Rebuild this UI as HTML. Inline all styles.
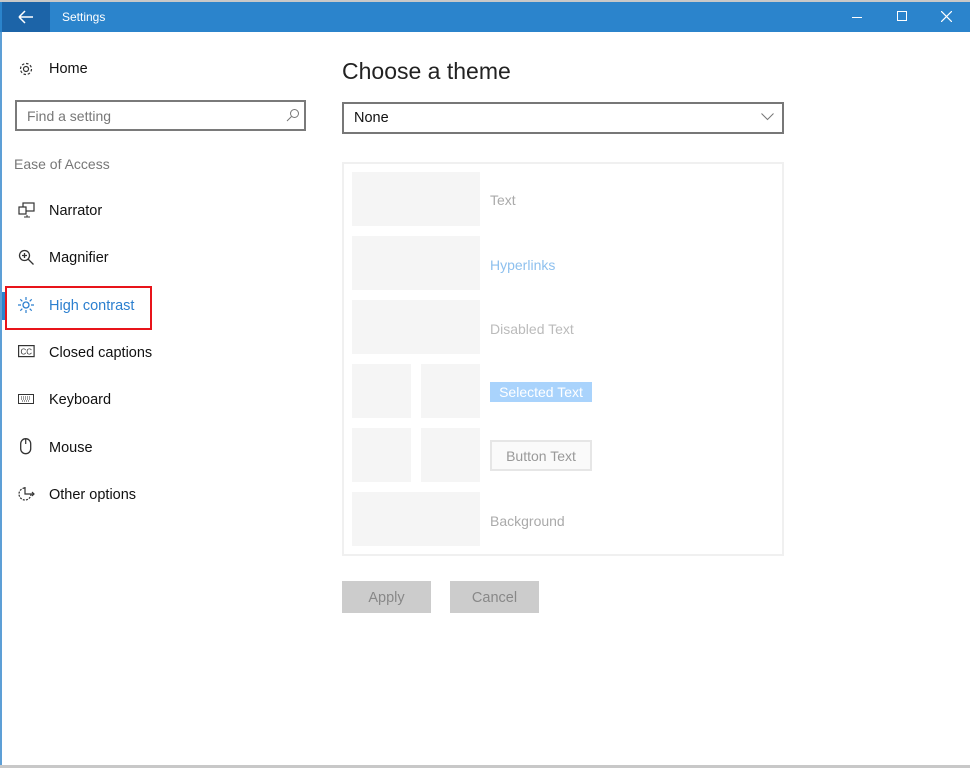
<!DOCTYPE html>
<html><head><meta charset="utf-8"><style>
*{margin:0;padding:0;box-sizing:border-box}
body{width:970px;height:768px;background:#fff;font-family:"Liberation Sans",sans-serif;position:relative;overflow:hidden}
.a{position:absolute}
.nav{position:absolute;left:49px;font-size:14.5px;color:#111}
.ic{position:absolute;left:18px}
.sw{position:absolute;background:#f5f5f5}
.lb{position:absolute;left:490px;font-size:14px;color:#aaa}
</style></head><body>
<div class="a" style="left:0;top:0;width:970px;height:2px;background:#c8c8c8"></div>
<div class="a" style="left:0;top:2px;width:970px;height:30px;background:#2b84cc"></div>
<div class="a" style="left:2px;top:2px;width:48px;height:30px;background:#1c64a8"></div>
<svg class="a" style="left:18px;top:10px" width="16" height="14" viewBox="0 0 16 14"><path d="M1 7H15M1 7L7 1M1 7L7 13" stroke="#fff" stroke-width="1.5" fill="none"/></svg>
<div class="a" style="left:62px;top:10px;font-size:12px;color:#fff">Settings</div>
<div class="a" style="left:852px;top:17px;width:10px;height:1px;background:#fff"></div>
<div class="a" style="left:897px;top:11px;width:10px;height:10px;border:1px solid #fff"></div>
<svg class="a" style="left:941px;top:11px" width="11" height="11"><path d="M0 0L11 11M11 0L0 11" stroke="#fff" stroke-width="1.2"/></svg>
<div class="a" style="left:0;top:32px;width:2px;height:736px;background:#5d9fd6"></div>
<div class="a" style="left:0;top:765px;width:970px;height:3px;background:#c8c8c8"></div>

<svg class="ic" style="top:61px" width="16" height="16" viewBox="0 0 16 16"><circle cx="8" cy="8" r="2.5" fill="none" stroke="#333" stroke-width="1.2"/><circle cx="8" cy="8" r="5.5" fill="none" stroke="#333" stroke-width="1.2" stroke-dasharray="2.5 1.8"/></svg>
<div class="nav" style="top:61px">Home</div>
<div class="a" style="left:15px;top:100px;width:291px;height:31px;border:2px solid #7a7a7a"></div>
<div class="a" style="left:27px;top:108px;font-size:14px;color:#777">Find a setting</div>
<svg class="a" style="left:286px;top:108px" width="14" height="14"><circle cx="8.5" cy="5.5" r="4" fill="none" stroke="#777"/><path d="M5.5 8.5L1 13" stroke="#777"/></svg>
<div class="a" style="left:14px;top:156px;font-size:14px;color:#777">Ease of Access</div>

<svg class="ic" style="top:202px" width="18" height="16"><rect x="5" y="1" width="11" height="8" fill="none" stroke="#333" stroke-width="1.2"/><rect x="1" y="5" width="7" height="7" fill="#fff" stroke="#333" stroke-width="1.2"/><path d="M9 13v2M6 15h6" stroke="#333"/></svg>
<div class="nav" style="top:203px">Narrator</div>
<svg class="ic" style="top:249px" width="17" height="17"><circle cx="6.5" cy="6.5" r="5" fill="none" stroke="#333" stroke-width="1.3"/><path d="M10 10L15.5 15.5M6.5 4v5M4 6.5h5" stroke="#333" stroke-width="1.3"/></svg>
<div class="nav" style="top:250px">Magnifier</div>
<div class="a" style="left:2px;top:292px;width:3px;height:28px;background:#2b84cc"></div>
<svg class="ic" style="top:297px" width="16" height="16"><circle cx="8" cy="8" r="3" fill="none" stroke="#2b7fcf" stroke-width="1.3"/><path d="M8 0v3M8 13v3M0 8h3M13 8h3M2.3 2.3l2 2M11.7 11.7l2 2M2.3 13.7l2-2M11.7 4.3l2-2" stroke="#2b7fcf" stroke-width="1.2"/></svg>
<div class="nav" style="top:298px;color:#2b7fcf">High contrast</div>
<div class="a" style="left:5px;top:286px;width:147px;height:44px;border:2px solid #e8141a"></div>
<svg class="ic" style="top:345px" width="17" height="13"><rect x="0.6" y="0.6" width="15.5" height="11" fill="none" stroke="#333" stroke-width="1.2"/><text x="2.5" y="9.5" font-size="8" font-family="Liberation Sans" fill="#333">CC</text></svg>
<div class="nav" style="top:345px">Closed captions</div>
<svg class="ic" style="top:394px" width="16" height="10"><rect x="0.5" y="0.5" width="15" height="9" fill="none" stroke="#333"/><path d="M3 3h10M3 5h10M4 7h8" stroke="#333" stroke-dasharray="1 1"/></svg>
<div class="nav" style="top:392px">Keyboard</div>
<svg class="ic" style="top:438px;left:20px" width="12" height="17"><rect x="0.7" y="0.7" width="10" height="15" rx="5" fill="none" stroke="#333" stroke-width="1.3"/><path d="M5.7 1v5" stroke="#333" stroke-width="1.2"/></svg>
<div class="nav" style="top:440px">Mouse</div>
<svg class="ic" style="top:485px" width="18" height="17"><path d="M13 9a6 6 0 1 1-6-6" fill="none" stroke="#333" stroke-width="1.2" stroke-dasharray="2 1.2"/><path d="M7 2v7h9M14 7l2 2-2 2" fill="none" stroke="#333" stroke-width="1.2"/></svg>
<div class="nav" style="top:487px">Other options</div>

<div class="a" style="left:342px;top:58px;font-size:23px;color:#222">Choose a theme</div>
<div class="a" style="left:342px;top:102px;width:442px;height:32px;border:2px solid #777"></div>
<div class="a" style="left:354px;top:110px;font-size:14.5px;color:#111">None</div>
<svg class="a" style="left:761px;top:113px" width="13" height="8"><path d="M0.5 0.5L6.5 6.5L12.5 0.5" fill="none" stroke="#777"/></svg>

<div class="a" style="left:342px;top:162px;width:442px;height:394px;border:2px solid #f0f0f0"></div>
<div class="sw" style="left:352px;top:172px;width:128px;height:54px"></div>
<div class="sw" style="left:352px;top:236px;width:128px;height:54px"></div>
<div class="sw" style="left:352px;top:300px;width:128px;height:54px"></div>
<div class="sw" style="left:352px;top:364px;width:59px;height:54px"></div>
<div class="sw" style="left:421px;top:364px;width:59px;height:54px"></div>
<div class="sw" style="left:352px;top:428px;width:59px;height:54px"></div>
<div class="sw" style="left:421px;top:428px;width:59px;height:54px"></div>
<div class="sw" style="left:352px;top:492px;width:128px;height:54px"></div>
<div class="lb" style="top:192px">Text</div>
<div class="lb" style="top:257px;color:#8ec0ee">Hyperlinks</div>
<div class="lb" style="top:321px;color:#bbb">Disabled Text</div>
<div class="lb" style="top:382px;width:102px;height:20px;background:#a9d3fc;color:#fff;text-align:center;line-height:20px">Selected Text</div>
<div class="lb" style="top:440px;width:102px;height:31px;border:2px solid #e6e6e6;background:#fafafa;color:#999;text-align:center;line-height:28px">Button Text</div>
<div class="lb" style="top:513px">Background</div>

<div class="a" style="left:342px;top:581px;width:89px;height:32px;background:#ccc;color:#888;font-size:14.5px;text-align:center;line-height:34px">Apply</div>
<div class="a" style="left:450px;top:581px;width:89px;height:32px;background:#ccc;color:#888;font-size:14.5px;text-align:center;line-height:34px">Cancel</div>
</body></html>
